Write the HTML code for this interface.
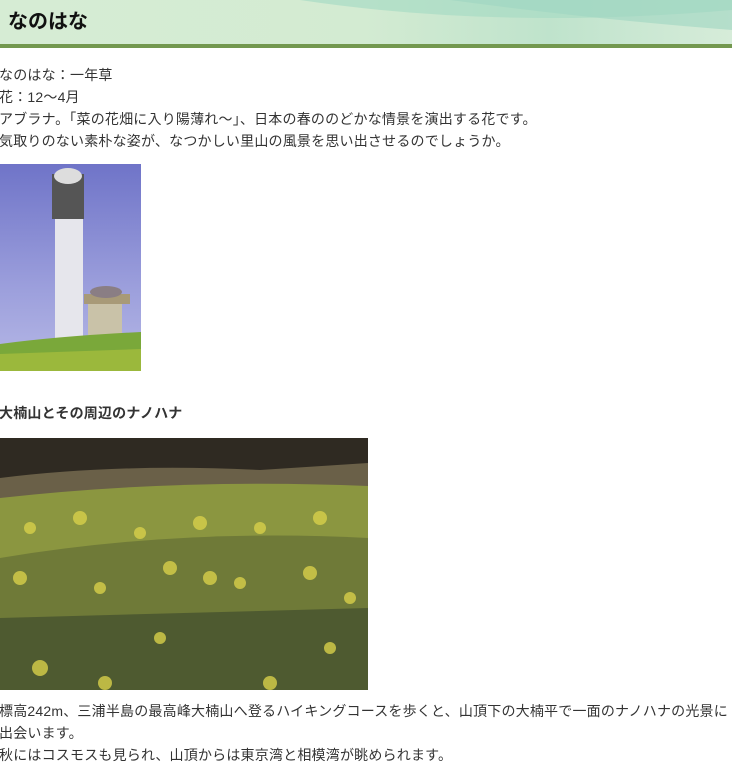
<!DOCTYPE html>
<html><head><meta charset="utf-8"><style>
*{margin:0;padding:0}
body{width:732px;height:772px;overflow:hidden;background:#fff;font-family:"Liberation Sans","Noto Sans CJK JP",sans-serif;color:#333;font-size:14px;position:relative}
.hd{position:absolute;left:0;top:0;width:732px;height:44px;background:linear-gradient(90deg,#d6ecd4 0%,#d3ebd2 50%,#bfe3cc 75%,#d6ecd9 100%);overflow:hidden}
.hd h1{position:absolute;left:8px;top:5px;font-size:20px;font-weight:bold;color:#111}
.bar{position:absolute;left:0;top:44px;width:732px;height:4px;background:#73984f}
.t{position:absolute;left:-1px;white-space:nowrap;line-height:22px;letter-spacing:0.2px}
</style></head><body>
<div class="hd">
<svg width="732" height="44" style="position:absolute;left:0;top:0"><path d="M300 0 Q500 30 732 10 L732 0Z" fill="#a8dcc4" opacity=".7"/><path d="M450 0 Q600 20 732 30 L732 0Z" fill="#9fd6c2" opacity=".6"/></svg>
<h1>なのはな</h1></div>
<div class="bar"></div>
<div class="t" style="top:64px">なのはな：一年草</div>
<div class="t" style="top:86px">花：12～4月</div>
<div class="t" style="top:108px">アブラナ。「菜の花畑に入り陽薄れ～」、日本の春ののどかな情景を演出する花です。</div>
<div class="t" style="top:130px">気取りのない素朴な姿が、なつかしい里山の風景を思い出させるのでしょうか。</div>
<svg style="position:absolute;left:0;top:164px" width="141" height="207">
<defs><linearGradient id="sky" x1="0" y1="0" x2="0" y2="1"><stop offset="0" stop-color="#6f74c8"/><stop offset=".6" stop-color="#9c9fdc"/><stop offset="1" stop-color="#b6b8e6"/></linearGradient></defs>
<rect width="141" height="207" fill="url(#sky)"/>
<rect x="55" y="40" width="28" height="140" fill="#e6e6ec"/>
<rect x="52" y="10" width="32" height="45" fill="#555"/>
<ellipse cx="68" cy="12" rx="14" ry="8" fill="#ddd"/>
<rect x="84" y="130" width="46" height="10" fill="#a89a78"/>
<rect x="88" y="140" width="34" height="40" fill="#c9c2a8"/>
<ellipse cx="106" cy="128" rx="16" ry="6" fill="#8a7e84"/>
<path d="M0 180 Q60 172 141 168 L141 207 L0 207Z" fill="#7aa83a"/>
<path d="M0 190 L141 185 L141 207 L0 207Z" fill="#9bb83c"/>
</svg>
<div class="t" style="top:402px;font-weight:bold">大楠山とその周辺のナノハナ</div>
<svg style="position:absolute;left:0;top:438px" width="368" height="252">
<rect width="368" height="252" fill="#5d6a3a"/>
<rect width="368" height="40" fill="#2f2a22"/>
<path d="M0 40 Q120 25 260 32 L368 25 L368 60 Q200 45 0 70Z" fill="#6a6048"/>
<path d="M0 60 Q180 40 368 48 L368 252 L0 252Z" fill="#8b9640"/>
<path d="M0 120 Q180 90 368 100 L368 252 L0 252Z" fill="#6f7a38"/>
<path d="M0 180 L368 170 L368 252 L0 252Z" fill="#4e5a30"/>
<g fill="#d8d04a" opacity=".8">
<circle cx="30" cy="90" r="6"/><circle cx="80" cy="80" r="7"/><circle cx="140" cy="95" r="6"/><circle cx="200" cy="85" r="7"/><circle cx="260" cy="90" r="6"/><circle cx="320" cy="80" r="7"/>
<circle cx="20" cy="140" r="7"/><circle cx="100" cy="150" r="6"/><circle cx="170" cy="130" r="7"/><circle cx="240" cy="145" r="6"/><circle cx="310" cy="135" r="7"/><circle cx="350" cy="160" r="6"/>
<circle cx="40" cy="230" r="8"/><circle cx="105" cy="245" r="7"/><circle cx="160" cy="200" r="6"/><circle cx="210" cy="140" r="7"/><circle cx="270" cy="245" r="7"/><circle cx="330" cy="210" r="6"/>
</g></svg>
<div class="t" style="top:700px">標高242m、三浦半島の最高峰大楠山へ登るハイキングコースを歩くと、山頂下の大楠平で一面のナノハナの光景に</div>
<div class="t" style="top:722px">出会います。</div>
<div class="t" style="top:744px">秋にはコスモスも見られ、山頂からは東京湾と相模湾が眺められます。</div>
</body></html>
